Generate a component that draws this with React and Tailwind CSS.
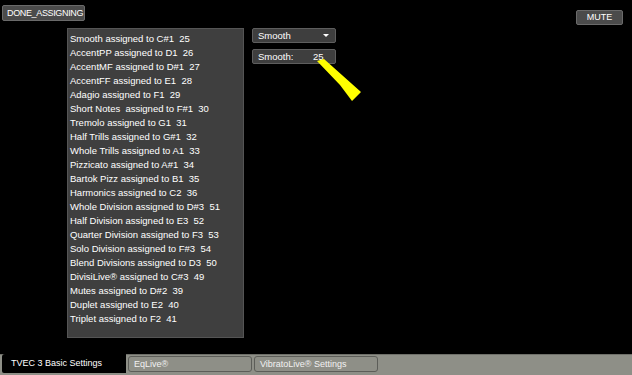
import React from "react";

const items = [
  "Smooth assigned to C#1  25",
  "AccentPP assigned to D1  26",
  "AccentMF assigned to D#1  27",
  "AccentFF assigned to E1  28",
  "Adagio assigned to F1  29",
  "Short Notes  assigned to F#1  30",
  "Tremolo assigned to G1  31",
  "Half Trills assigned to G#1  32",
  "Whole Trills assigned to A1  33",
  "Pizzicato assigned to A#1  34",
  "Bartok Pizz assigned to B1  35",
  "Harmonics assigned to C2  36",
  "Whole Division assigned to D#3  51",
  "Half Division assigned to E3  52",
  "Quarter Division assigned to F3  53",
  "Solo Division assigned to F#3  54",
  "Blend Divisions assigned to D3  50",
  "DivisiLive® assigned to C#3  49",
  "Mutes assigned to D#2  39",
  "Duplet assigned to E2  40",
  "Triplet assigned to F2  41",
];

export default function App() {
  return (
    <div
      className="relative w-[632px] h-[375px] bg-black flex flex-col overflow-hidden text-white text-[9.5px]"
      style={{ fontFamily: '"Liberation Sans", Arial, sans-serif' }}
    >
      <div className="h-[28px] flex items-start justify-between">
        <div className="mt-[5px] ml-[2px] h-[16px] w-[83px] rounded-[2px] bg-[#4b4b4b] border border-[#6a6a6a] flex items-center pl-[4px] leading-none text-[9px] tracking-[-0.35px]">
          DONE_ASSIGNING
        </div>
        <div className="mt-[10px] mr-[9px] h-[15px] w-[47px] rounded-[2px] bg-[#4b4b4b] border border-[#6a6a6a] flex items-center justify-center leading-none text-[9px]">
          MUTE
        </div>
      </div>
      <div className="flex pl-[67px] gap-[8px]">
        <div className="w-[177px] h-[310px] bg-[#3f3f3f] border border-[#555] pt-[3px] pl-[2px]">
          {items.map((t) => (
            <div key={t} className="h-[14px] leading-[14px] whitespace-pre">
              {t}
            </div>
          ))}
        </div>
        <div className="flex flex-col gap-[6px] w-[84px]">
          <div className="h-[15px] rounded-[2px] bg-[#3e3e3e] border border-[#5e5e5e] flex items-center justify-between pl-[5px] pr-[6px] leading-none">
            <span>Smooth</span>
            <span className="w-0 h-0 border-l-[3px] border-r-[3px] border-t-[3px] border-l-transparent border-r-transparent border-t-white" />
          </div>
          <div className="h-[15px] rounded-[2px] bg-[#3e3e3e] border border-[#5e5e5e] flex items-center pl-[5px] leading-none whitespace-pre">
            <span className="w-[55px]">Smooth:</span>
            <span>25</span>
          </div>
        </div>
      </div>
      <div className="mt-auto h-[21px] bg-[#8e8f87] border-t border-[#6e6f69] flex items-start pl-[2px] gap-[2px]">
        <div className="h-[19px] -mt-px w-[124px] bg-black rounded-bl-[2px] rounded-tl-[3px] flex items-center pl-[9px] leading-none text-[9px]">
          TVEC 3 Basic Settings
        </div>
        <div className="mt-[1px] h-[16px] w-[124px] rounded-[3px] border border-[#5c5d58] bg-[#8e8f87] flex items-center pl-[5px] leading-none text-[9px] text-[#f2f2f2]">
          EqLive®
        </div>
        <div className="mt-[1px] h-[16px] w-[124px] rounded-[3px] border border-[#5c5d58] bg-[#8e8f87] flex items-center pl-[5px] leading-none text-[9px] text-[#f2f2f2]">
          VibratoLive® Settings
        </div>
      </div>
      <svg className="absolute left-0 top-0 pointer-events-none" width="632" height="375">
        <polygon points="317,61 324,59 361,92 352,101 340,85" fill="#ffff00" />
      </svg>
    </div>
  );
}
